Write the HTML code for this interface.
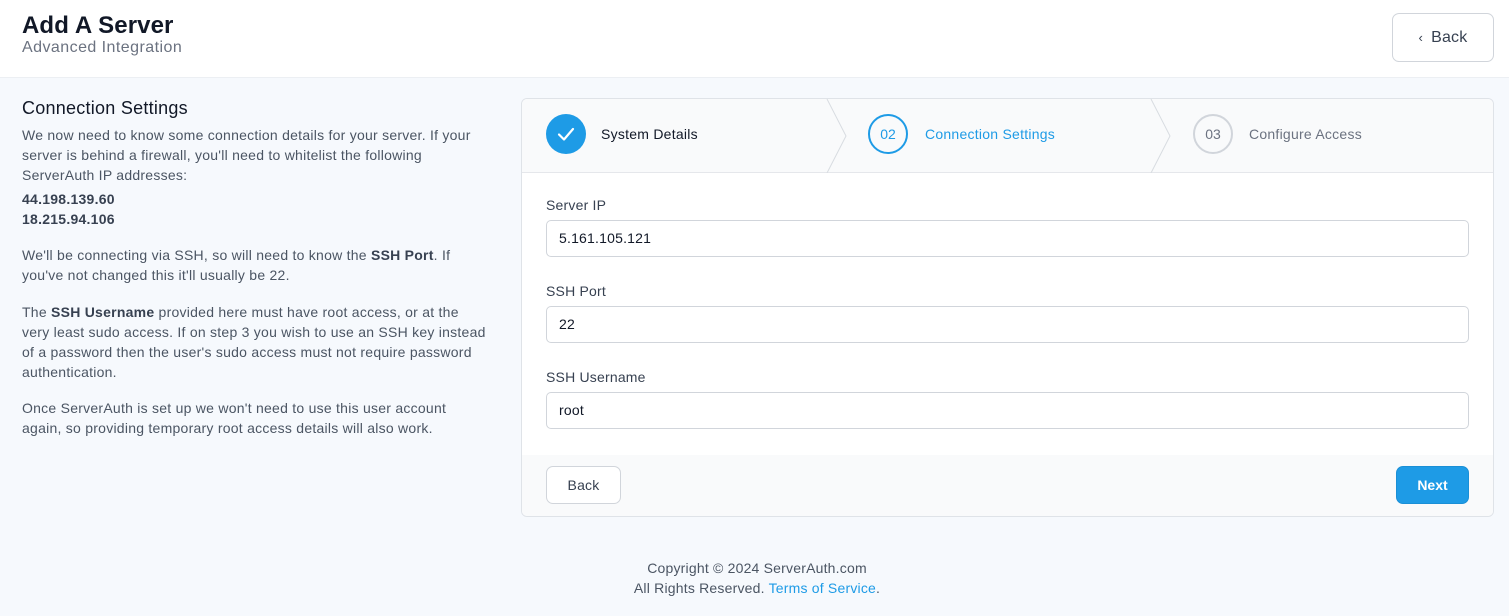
<!DOCTYPE html>
<html><head><meta charset="utf-8"><style>
*{box-sizing:border-box;margin:0;padding:0}
body{width:1509px;height:616px;background:#f6f9fd;font-family:"Liberation Sans",sans-serif;color:#4b5563;position:relative;overflow:hidden;font-size:14px}
.a{position:absolute;white-space:nowrap}
.hdr{position:absolute;left:0;top:0;width:1509px;height:78px;background:#fff;border-bottom:1px solid #eceff3}
.btn{position:absolute;border:1px solid #d1d5db;border-radius:7px;background:#fff;color:#374151;font-weight:bold;display:flex;align-items:center;justify-content:center}
.inp{position:absolute;left:546px;width:923px;height:37px;border:1px solid #d1d5db;border-radius:5px;background:#fff;color:#111827;padding-left:12px;line-height:35px;font-size:14px;letter-spacing:.2px}
.lbl{position:absolute;left:546px;color:#374151;font-size:14px;letter-spacing:.2px}
.ls{letter-spacing:.25px}
b{color:#374151}
</style></head><body>
<div class="hdr"></div>
<div class="a" style="left:22px;top:12px;font-size:24px;font-weight:bold;color:#111827;letter-spacing:.1px">Add A Server</div>
<div class="a" style="left:22px;top:39px;font-size:16px;color:#6b7280;letter-spacing:.45px">Advanced Integration</div>
<div class="btn" style="left:1392px;top:13px;width:102px;height:49px;font-size:16px;font-weight:normal;color:#374151;letter-spacing:.2px"><span style="font-size:13px;margin-right:8px">&#8249;</span>Back</div>

<div class="a" style="left:22px;top:98px;font-size:18px;color:#111827;letter-spacing:.25px">Connection Settings</div>
<div class="a ls" style="left:22px;top:125px;line-height:20px">We now need to know some connection details for your server. If your<br>server is behind a firewall, you'll need to whitelist the following<br>ServerAuth IP addresses:</div>
<div class="a ls" style="left:22px;top:189px;line-height:20px;font-weight:bold;color:#374151">44.198.139.60<br>18.215.94.106</div>
<div class="a ls" style="left:22px;top:245px;line-height:20px">We'll be connecting via SSH, so will need to know the <b>SSH Port</b>. If<br>you've not changed this it'll usually be 22.</div>
<div class="a ls" style="left:22px;top:302px;line-height:20px">The <b>SSH Username</b> provided here must have root access, or at the<br>very least sudo access. If on step 3 you wish to use an SSH key instead<br>of a password then the user's sudo access must not require password<br>authentication.</div>
<div class="a ls" style="left:22px;top:398px;line-height:20px">Once ServerAuth is set up we won't need to use this user account<br>again, so providing temporary root access details will also work.</div>

<div style="position:absolute;left:521px;top:98px;width:973px;height:419px;border:1px solid #dfe3e8;border-radius:6px;background:#fff;overflow:hidden">
 <div style="position:absolute;left:0;top:0;width:973px;height:74px;background:#f9fafb;border-bottom:1px solid #e5e7eb"></div>
 <svg style="position:absolute;left:0;top:0" width="973" height="74"><path d="M305 0 L324 37 L305 74" fill="none" stroke="#d8dce1"/><path d="M629 0 L648 37 L629 74" fill="none" stroke="#d8dce1"/></svg>
 <div style="position:absolute;left:0;top:356px;width:973px;height:63px;background:#f9fafb"></div>
</div>
<div class="a" style="left:546px;top:114px;width:40px;height:40px;border-radius:50%;background:#1e9be6"></div>
<svg class="a" style="left:546px;top:114px" width="40" height="40"><path d="M13 20.5 L18 25.5 L27 15" fill="none" stroke="#fff" stroke-width="2.2" stroke-linecap="round" stroke-linejoin="round"/></svg>
<div class="a ls" style="left:601px;top:126px;color:#111827">System Details</div>
<div class="a" style="left:868px;top:114px;width:40px;height:40px;border-radius:50%;border:2px solid #1e9be6;color:#1e9be6;text-align:center;line-height:36px">02</div>
<div class="a ls" style="left:925px;top:126px;color:#1e9be6">Connection Settings</div>
<div class="a" style="left:1193px;top:114px;width:40px;height:40px;border-radius:50%;border:2px solid #d1d5db;color:#6b7280;text-align:center;line-height:36px">03</div>
<div class="a ls" style="left:1249px;top:126px;color:#6b7280">Configure Access</div>

<div class="lbl" style="top:197px">Server IP</div>
<div class="inp" style="top:220px">5.161.105.121</div>
<div class="lbl" style="top:283px">SSH Port</div>
<div class="inp" style="top:306px">22</div>
<div class="lbl" style="top:369px">SSH Username</div>
<div class="inp" style="top:392px">root</div>
<div class="btn" style="left:546px;top:466px;width:75px;height:38px;font-weight:normal;letter-spacing:.2px">Back</div>
<div class="btn" style="left:1396px;top:466px;width:73px;height:38px;background:#1e9be6;border-color:#1a8fd6;color:#fff">Next</div>

<div class="a" style="left:0;width:1514px;top:558px;text-align:center;line-height:20px;letter-spacing:.2px">Copyright © 2024 ServerAuth.com<br>All Rights Reserved. <span style="color:#1e9be6">Terms of Service</span>.</div>
</body></html>
